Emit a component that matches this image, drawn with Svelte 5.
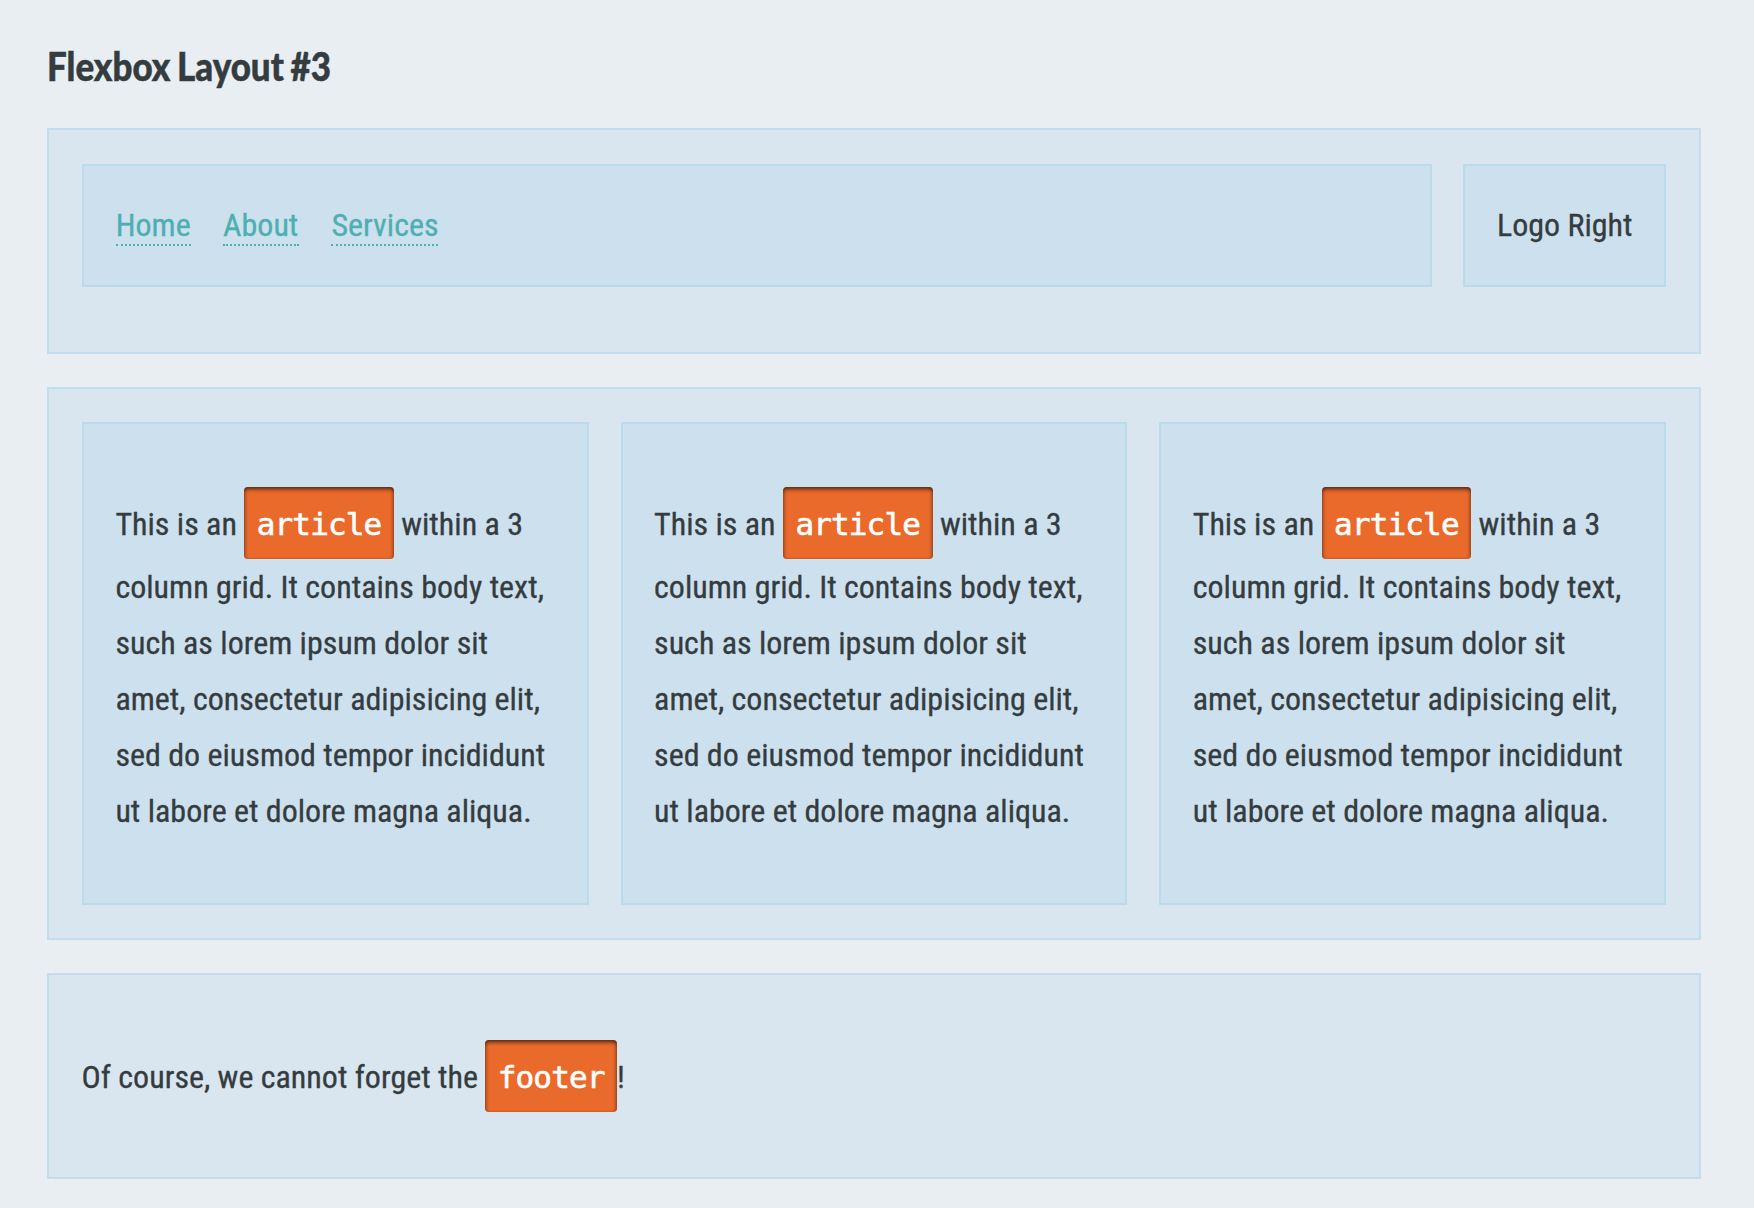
<script>
  const links = [
    { label: 'Home', width: 75 },
    { label: 'About', width: 76 },
    { label: 'Services', width: 107 }
  ];
  const articles = [1, 2, 3];
</script>

<main class="page">
  <h1>
    <svg width="300" height="64" role="img" aria-label="Flexbox Layout #3">
      <text x="0" y="41" textLength="284" lengthAdjust="spacingAndGlyphs">Flexbox Layout #3</text>
    </svg>
  </h1>

  <header class="panel top">
    <nav class="box">
      {#each links as link}
        <a href="#top" style:width="{link.width}px">{link.label}</a>
      {/each}
    </nav>
    <div class="box logo">Logo Right</div>
  </header>

  <section class="panel grid">
    {#each articles as id (id)}
      <article class="box">
        <p>
          This is an <code>article</code> within a 3<br />
          column grid. It contains body text,<br />
          such as lorem ipsum dolor sit<br />
          amet, consectetur adipisicing elit,<br />
          sed do eiusmod tempor incididunt<br />
          ut labore et dolore magna aliqua.
        </p>
      </article>
    {/each}
  </section>

  <footer class="panel">
    <p>Of course, we cannot forget the <code>footer</code>!</p>
  </footer>
</main>

<style>
  :global(body) {
    background: #e8eef2;
  }
  .page {
    box-sizing: border-box;
    width: 1754px;
    height: 1208px;
    padding: 40px 53px 0 47px;
    overflow: hidden;
    color: #343c40;
    font: 32px/56px 'Roboto Condensed', Roboto, sans-serif;
    font-stretch: 75%;
    -webkit-text-stroke: 0.3px;
  }
  .page * {
    box-sizing: border-box;
  }
  h1 {
    height: 56px;
    margin: 0 0 32px;
    line-height: 0;
  }
  h1 svg {
    overflow: visible;
  }
  h1 text {
    font: 900 40px Lato, sans-serif;
    word-spacing: -2px;
    fill: #343c40;
    stroke: #343c40;
    stroke-width: 0.5px;
  }
  .panel {
    background: #d9e6ef;
    border: 2px solid #c2deec;
  }
  .box {
    background: #cde0ee;
    border: 2px solid #bbdaea;
  }
  .top {
    display: flex;
    align-items: flex-start;
    gap: 31px;
    height: 226px;
    padding: 34px 33px 0;
    margin-bottom: 33px;
  }
  nav {
    display: flex;
    flex: 1;
    gap: 32.4px;
    height: 123px;
    padding: 31px 31.7px;
  }
  nav a {
    height: 49px;
    color: #4eafb1;
    border-bottom: 2px dotted #4eafb1;
    text-decoration: none;
    white-space: nowrap;
  }
  .logo {
    width: 203px;
    height: 123px;
    padding: 31px 32px;
    white-space: nowrap;
  }
  .grid {
    display: grid;
    grid-template-columns: repeat(3, 1fr);
    gap: 32px;
    height: 553px;
    padding: 33px;
    margin-bottom: 33px;
  }
  article {
    padding: 31px 31.4px;
    white-space: nowrap;
  }
  p {
    margin: 32px 0;
  }
  code {
    display: inline-block;
    height: 72px;
    padding: 9px 12.5px 7px 12.5px;
    border-radius: 4px;
    background: #ea6a2c;
    box-shadow: inset 0 2px 4px rgba(0, 0, 0, 0.7);
    color: #fff;
    font: 31px/56px 'DejaVu Sans Mono', monospace;
    letter-spacing: -0.86px;
    -webkit-text-stroke: 0.6px;
  }
  footer {
    height: 206px;
    padding: 33px;
  }
  footer p {
    margin-left: -0.4px;
  }
</style>
